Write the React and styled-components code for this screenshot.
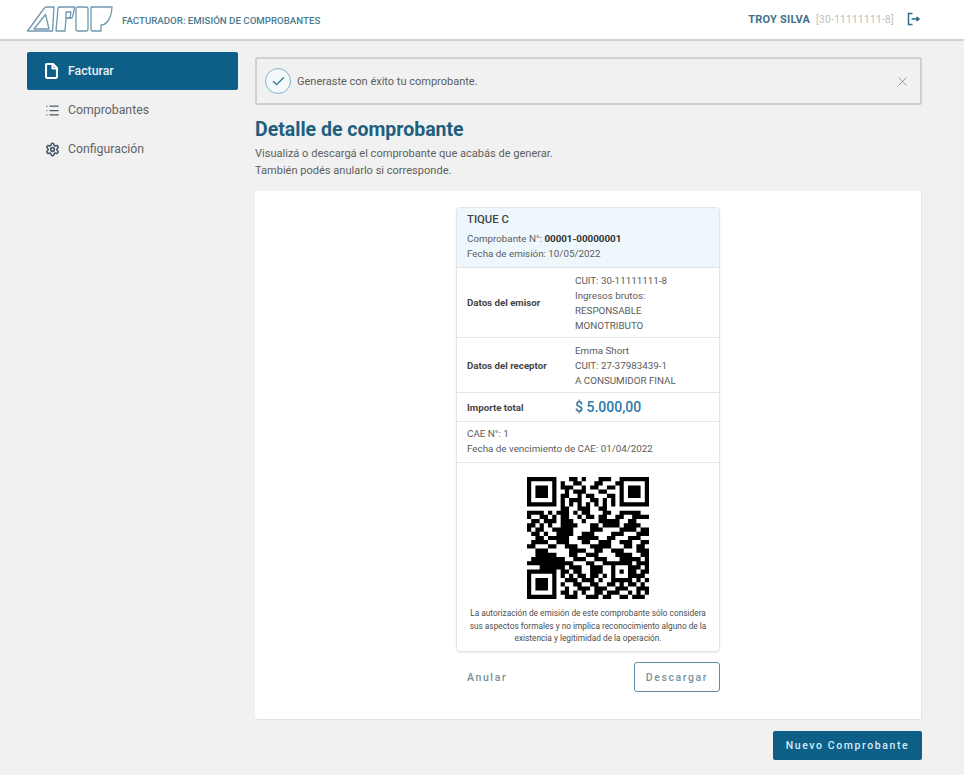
import React from "react";
import styled, { createGlobalStyle } from "styled-components";
import { Check, List, Settings, X } from "lucide-react";

const GlobalStyle = createGlobalStyle`
  html, body {
    margin: 0;
    padding: 0;
    background: #f1f1f1;
    font-family: Roboto, "Liberation Sans", sans-serif;
    color: #555;
  }
  * {
    box-sizing: border-box;
  }
`;

const Page = styled.div`
  width: 964px;
  height: 775px;
  overflow: hidden;
  display: flex;
  flex-direction: column;
`;

const Header = styled.header`
  height: 41px;
  flex: none;
  background: #fff;
  border-bottom: 2px solid #d2d2d2;
  display: flex;
  align-items: center;
  padding: 0 43px 1px 26px;
`;

const AppName = styled.span`
  margin-left: 9px;
  font-size: 9.7px;
  font-weight: 500;
  color: #4b7a90;
  padding-top: 3px;
`;

const UserArea = styled.div`
  margin-left: auto;
  display: flex;
  align-items: center;
`;

const UserName = styled.span`
  font-size: 11px;
  font-weight: 700;
  color: #3f7189;
  letter-spacing: 0.2px;
`;

const UserCuit = styled.span`
  font-size: 10px;
  color: #bdbdbd;
  margin-left: 6px;
  margin-right: 13px;
  letter-spacing: 0.35px;
`;

const Body = styled.div`
  flex: 1;
  display: flex;
  padding: 10px 42px 0 27px;
`;

const Sidebar = styled.nav`
  width: 211px;
  flex: none;
  display: flex;
  flex-direction: column;
  gap: 1px;
  padding-top: 1px;
`;

const NavItem = styled.div`
  height: 38px;
  display: flex;
  align-items: center;
  gap: 8px;
  padding-left: 18px;
  border-radius: 2px;
  font-size: 12.3px;
  font-weight: ${(p) => (p.$active ? 500 : 400)};
  background: ${(p) => (p.$active ? "#0e5f88" : "transparent")};
  color: ${(p) => (p.$active ? "#e8f3f8" : "#5f6468")};
  svg {
    flex: none;
    color: ${(p) => (p.$active ? "#fff" : "#45596a")};
  }
`;

const Main = styled.main`
  margin-left: 17px;
  flex: 1;
  min-width: 0;
  display: flex;
  flex-direction: column;
`;

const Alert = styled.div`
  margin-top: 6px;
  height: 48px;
  border: 2px solid #d0d0d0;
  border-radius: 2px;
  display: flex;
  align-items: center;
  padding: 0 10px 0 8px;
  font-size: 11px;
  color: #5d5d5d;
  gap: 6px;
`;

const CheckCircle = styled.span`
  width: 26px;
  height: 26px;
  border-radius: 50%;
  border: 1.5px solid #7db5cf;
  background: #f4f9fb;
  color: #2f7ba0;
  display: flex;
  align-items: center;
  justify-content: center;
`;

const CloseBtn = styled.span`
  margin-left: auto;
  display: flex;
  color: #8a8a8a;
`;

const Title = styled.h1`
  margin: 14px 0 0;
  font-size: 19.5px;
  line-height: 21px;
  font-weight: 700;
  color: #1f5f7e;
`;

const Subtitle = styled.p`
  margin: 5px 0 0;
  font-size: 11.05px;
  line-height: 17px;
  color: #5f5f5f;
`;

const Card = styled.section`
  margin-top: 12px;
  height: 529px;
  background: #fff;
  border-radius: 2px;
  border-bottom: 1px solid #e2e2e2;
  border-right: 1px solid #e6e6e6;
  padding-top: 16px;
  display: flex;
  flex-direction: column;
  align-items: center;
`;

const Ticket = styled.div`
  width: 264px;
  height: 445px;
  border: 1px solid #e4e4e4;
  border-radius: 4px;
  box-shadow: 0 1px 2px rgba(0, 0, 0, 0.08);
  display: flex;
  flex-direction: column;
  overflow: hidden;
`;

const TicketHead = styled.div`
  height: 60px;
  flex: none;
  background: #eef8fc;
  border-bottom: 1px solid #e2e2e2;
  padding: 5px 10px 0;
`;

const TicketType = styled.div`
  font-size: 11.3px;
  line-height: 14px;
  font-weight: 500;
  color: #444;
  margin-bottom: 4px;
`;

const SmallLine = styled.div`
  font-size: 9.8px;
  line-height: 15px;
  color: #5c5c5c;
  b {
    font-weight: 700;
    color: #333;
  }
`;

const Row = styled.div`
  height: ${(p) => p.$h}px;
  flex: none;
  display: flex;
  align-items: center;
  padding-left: 10px;
  border-bottom: 1px solid #e6e6e6;
`;

const RowLabel = styled.div`
  width: 108px;
  flex: none;
  font-size: 9.7px;
  font-weight: 700;
  color: #454545;
`;

const Amount = styled.div`
  font-size: 14px;
  font-weight: 500;
  color: #2b7aa8;
`;

const Block = styled.div`
  height: 41px;
  flex: none;
  padding: 4px 10px 0;
  border-bottom: 1px solid #e6e6e6;
`;

const QrArea = styled.div`
  flex: 1;
  display: flex;
  flex-direction: column;
  align-items: center;
  padding-top: 14px;
`;

const Legal = styled.p`
  margin: 8px 0 0;
  width: 246px;
  text-align: center;
  font-size: 8.3px;
  line-height: 12.5px;
  color: #4d4d4d;
`;

const Actions = styled.div`
  width: 264px;
  margin-top: 10px;
  display: flex;
  align-items: center;
  justify-content: space-between;
  padding-left: 11px;
`;

const LinkBtn = styled.span`
  font-size: 10.5px;
  font-weight: 500;
  letter-spacing: 1.6px;
  color: #7a8f99;
`;

const OutlineBtn = styled.button`
  width: 86px;
  height: 30px;
  background: #fff;
  border: 1px solid #5f8ea3;
  border-radius: 3px;
  font: 500 10.5px Roboto, sans-serif;
  letter-spacing: 1.6px;
  color: #7a929e;
  padding: 0;
`;

const Footer = styled.div`
  margin-top: 11px;
  display: flex;
  justify-content: flex-end;
`;

const PrimaryBtn = styled.button`
  width: 149px;
  height: 29px;
  background: #0e5f88;
  border: 0;
  border-radius: 2px;
  font: 500 10.5px Roboto, sans-serif;
  letter-spacing: 1.6px;
  color: #d5ecf6;
  padding: 0;
`;

const Logo = () => (
  <svg width="87" height="28" viewBox="0 0 87 28" fill="none" stroke="#6f98ae" strokeWidth="1.3" strokeLinejoin="round">
    <path d="M1.5 26 L18 3.5 Q19 2 21 2 H28 L26.5 26 Z" />
    <path d="M8 24 L19.5 9.5 L23 24 Z" />
    <path d="M32 3 Q32 2 33 2 H48.5 Q48 8 46 13 H40 L39 26 H30 Z" />
    <path d="M40 7 H45 L44 13 H40 Z" />
    <path d="M52 2 H60 Q62 2 62 4 V24 Q62 26 60 26 H52 Q50 26 50 24 V4 Q50 2 52 2 Z" />
    <path d="M65 2 H86 Q85.5 12 81 17 Q78.5 20 75 20 V26 H67 Q65 26 65 24 Z" />
  </svg>
);

const FileIcon = () => (
  <svg width="15" height="16" viewBox="0 0 15 16" fill="none" stroke="#fff" strokeWidth="2.1" strokeLinejoin="round">
    <path d="M1 2 Q1 1 2 1 H8 L12 5 V13.5 Q12 15 10.5 15 H2.5 Q1 15 1 13.5 Z" />
    <path d="M7.5 1 V5.5 H12" />
  </svg>
);

const LogoutIcon = () => (
  <svg width="14" height="14" viewBox="0 0 14 14" fill="none" stroke="#2f6a86" strokeWidth="1.5">
    <path d="M5.5 1.5 H1.5 V12.5 H5.5" />
    <path d="M4.5 7 H12" />
    <path d="M9.5 5 L12 7 L9.5 9" fill="#2f6a86" />
  </svg>
);

// modulos centrales del QR, los patrones fijos se pintan encima
const QR_ROWS = [
  "00000000001101000111000000000",
  "00000000100110001100010000000",
  "00000000111001011001100000000",
  "00000000010111000110000000000",
  "00000000110010110001100000000",
  "00000000101110011010100000000",
  "00000000101010101010100000000",
  "00000000110011100110000000000",
  "11110101110101100011001111100",
  "10011010110010110110011001111",
  "01101110111001000111110011000",
  "11010100111100011011110111100",
  "10110011111000011100001111011",
  "01101001111001110000111000111",
  "00110111110011111001100011100",
  "01111001110001100111001110011",
  "11000110011100011111000110110",
  "00111000001111001100111000111",
  "00111110001100111000011110011",
  "01111111100111001110001111101",
  "11111111111000110011000000111",
  "00011111101110011100000001101",
  "00000000110110011100000001011",
  "00000000101011011010000001110",
  "00000000011101110100000000101",
  "00000000100110011001101011010",
  "00000000010011101110011100111",
  "00000000110101001101110010101",
  "00000000011100111011001101110",
];

const QR_SIZE = 29;

const qrCells = () => {
  const cells = QR_ROWS.map((r) => r.split("").map((c) => c === "1"));
  const finder = (ox, oy) => {
    for (let y = 0; y < 7; y++) {
      for (let x = 0; x < 7; x++) {
        const ring = x === 0 || y === 0 || x === 6 || y === 6;
        const core = x >= 2 && x <= 4 && y >= 2 && y <= 4;
        cells[oy + y][ox + x] = ring || core;
      }
    }
  };
  finder(0, 0);
  finder(QR_SIZE - 7, 0);
  finder(0, QR_SIZE - 7);
  for (let y = 0; y < 5; y++) {
    for (let x = 0; x < 5; x++) {
      const ring = x === 0 || y === 0 || x === 4 || y === 4;
      cells[20 + y][20 + x] = ring || (x === 2 && y === 2);
    }
  }
  return cells;
};

const QrCode = () => {
  let d = "";
  qrCells().forEach((row, y) =>
    row.forEach((on, x) => {
      if (on) d += `M${x} ${y}h1v1h-1z`;
    })
  );
  return (
    <svg width="122" height="122" viewBox="0 0 29 29" shapeRendering="geometricPrecision">
      <path d={d} fill="#000" />
    </svg>
  );
};

export default function App() {
  return (
    <Page>
      <GlobalStyle />
      <Header>
        <Logo />
        <AppName>FACTURADOR: EMISIÓN DE COMPROBANTES</AppName>
        <UserArea>
          <UserName>TROY SILVA</UserName>
          <UserCuit>[30-11111111-8]</UserCuit>
          <LogoutIcon />
        </UserArea>
      </Header>
      <Body>
        <Sidebar>
          <NavItem $active>
            <FileIcon />
            Facturar
          </NavItem>
          <NavItem>
            <List size={15} strokeWidth={2} />
            Comprobantes
          </NavItem>
          <NavItem>
            <Settings size={15} strokeWidth={2.6} />
            Configuración
          </NavItem>
        </Sidebar>
        <Main>
          <Alert>
            <CheckCircle>
              <Check size={15} strokeWidth={2.2} />
            </CheckCircle>
            Generaste con éxito tu comprobante.
            <CloseBtn>
              <X size={15} strokeWidth={1.3} />
            </CloseBtn>
          </Alert>
          <Title>Detalle de comprobante</Title>
          <Subtitle>
            Visualizá o descargá el comprobante que acabás de generar.
            <br />
            También podés anularlo si corresponde.
          </Subtitle>
          <Card>
            <Ticket>
              <TicketHead>
                <TicketType>TIQUE C</TicketType>
                <SmallLine>
                  Comprobante N°: <b>00001-00000001</b>
                </SmallLine>
                <SmallLine>Fecha de emisión: 10/05/2022</SmallLine>
              </TicketHead>
              <Row $h={70}>
                <RowLabel>Datos del emisor</RowLabel>
                <div>
                  <SmallLine>CUIT: 30-11111111-8</SmallLine>
                  <SmallLine>Ingresos brutos:</SmallLine>
                  <SmallLine>RESPONSABLE</SmallLine>
                  <SmallLine>MONOTRIBUTO</SmallLine>
                </div>
              </Row>
              <Row $h={55}>
                <RowLabel>Datos del receptor</RowLabel>
                <div>
                  <SmallLine>Emma Short</SmallLine>
                  <SmallLine>CUIT: 27-37983439-1</SmallLine>
                  <SmallLine>A CONSUMIDOR FINAL</SmallLine>
                </div>
              </Row>
              <Row $h={29}>
                <RowLabel>Importe total</RowLabel>
                <Amount>$ 5.000,00</Amount>
              </Row>
              <Block>
                <SmallLine>CAE N°: 1</SmallLine>
                <SmallLine>Fecha de vencimiento de CAE: 01/04/2022</SmallLine>
              </Block>
              <QrArea>
                <QrCode />
                <Legal>
                  La autorización de emisión de este comprobante sólo considera
                  sus aspectos formales y no implica reconocimiento alguno de la
                  existencia y legitimidad de la operación.
                </Legal>
              </QrArea>
            </Ticket>
            <Actions>
              <LinkBtn>Anular</LinkBtn>
              <OutlineBtn>Descargar</OutlineBtn>
            </Actions>
          </Card>
          <Footer>
            <PrimaryBtn>Nuevo Comprobante</PrimaryBtn>
          </Footer>
        </Main>
      </Body>
    </Page>
  );
}
